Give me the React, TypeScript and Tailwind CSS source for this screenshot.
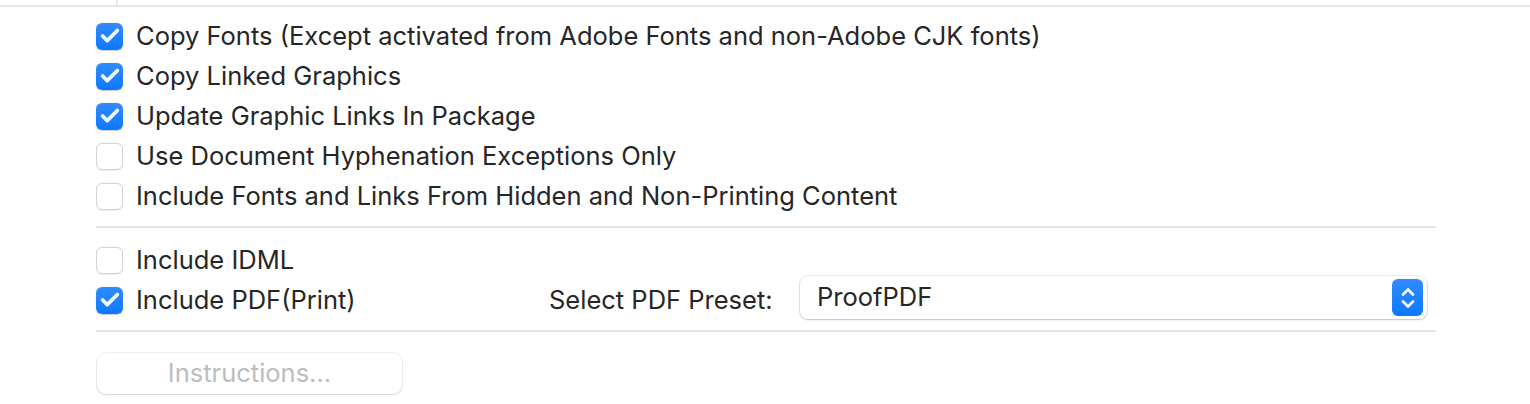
import { Check } from "lucide-react";

type Option = { label: string; checked: boolean };

const packageOptions: Option[] = [
  { label: "Copy Fonts (Except activated from Adobe Fonts and non-Adobe CJK fonts)", checked: true },
  { label: "Copy Linked Graphics", checked: true },
  { label: "Update Graphic Links In Package", checked: true },
  { label: "Use Document Hyphenation Exceptions Only", checked: false },
  { label: "Include Fonts and Links From Hidden and Non-Printing Content", checked: false },
];

function Checkbox({ checked }: { checked: boolean }) {
  if (checked) {
    return (
      <span className="flex h-[27px] w-[27px] shrink-0 items-center justify-center rounded-[6px] bg-gradient-to-b from-[#2f8cff] to-[#0a78ff] shadow-[0_0.5px_1px_rgba(0,0,0,0.2)]">
        <Check size={22} strokeWidth={4} className="text-white" />
      </span>
    );
  }
  return (
    <span className="h-[27px] w-[27px] shrink-0 rounded-[6px] border border-[#d4d4d4] bg-white shadow-[0_0.5px_1px_rgba(0,0,0,0.08)]" />
  );
}

function Row({ option }: { option: Option }) {
  return (
    <div className="flex h-[40px] items-center gap-[13px]">
      <Checkbox checked={option.checked} />
      <span>{option.label}</span>
    </div>
  );
}

export default function App() {
  return (
    <div
      className="h-[404px] w-[1530px] overflow-hidden bg-white text-[25.5px] text-[#262626]"
      style={{ fontFamily: '"Inter", "Liberation Sans", sans-serif' }}
    >
      {/* Top edge of the tab bar above */}
      <div className="flex h-[7px] border-b-2 border-[#e6e6e6]">
        <div className="w-[118px] border-r-2 border-[#e6e6e6]" />
      </div>

      <div className="w-[1340px] pl-[96px] pt-[9px] box-content">
        {packageOptions.map((o) => (
          <Row key={o.label} option={o} />
        ))}

        <div className="mt-[10px] h-[2px] bg-[#e4e4e4]" />

        <div className="pt-[12px]">
          <Row option={{ label: "Include IDML", checked: false }} />
          <div className="flex h-[40px] items-center">
            <div className="flex w-[453px] items-center gap-[13px]">
              <Checkbox checked />
              <span>Include PDF(Print)</span>
            </div>
            <span className="w-[251px]">Select PDF Preset:</span>
            <div className="mb-[5px] flex h-[43px] w-[627px] shrink-0 items-center justify-between rounded-[8px] bg-white pl-[17px] pr-[4px] shadow-[0_0_0_1px_rgba(0,0,0,0.08),0_1px_2px_rgba(0,0,0,0.18)]">
              <span>ProofPDF</span>
              <span className="flex h-[37px] w-[31px] items-center justify-center rounded-[6px] bg-gradient-to-b from-[#2f8cff] to-[#0a78ff]">
                <svg width="16" height="26" viewBox="0 0 16 26" fill="none" stroke="white" strokeWidth="2.6" strokeLinecap="round" strokeLinejoin="round">
                  <path d="M3 9.5 L8 4.5 L13 9.5" />
                  <path d="M3 16.5 L8 21.5 L13 16.5" />
                </svg>
              </span>
            </div>
          </div>
        </div>

        <div className="mt-[10px] h-[2px] bg-[#e4e4e4]" />

        <button
          type="button"
          disabled
          className="mt-[21px] ml-[1px] flex h-[41px] w-[305px] items-center justify-center rounded-[9px] bg-white text-[#bdbdbd] shadow-[0_0_0_1px_rgba(0,0,0,0.06),0_1px_2px_rgba(0,0,0,0.12)]"
        >
          Instructions...
        </button>
      </div>
    </div>
  );
}
